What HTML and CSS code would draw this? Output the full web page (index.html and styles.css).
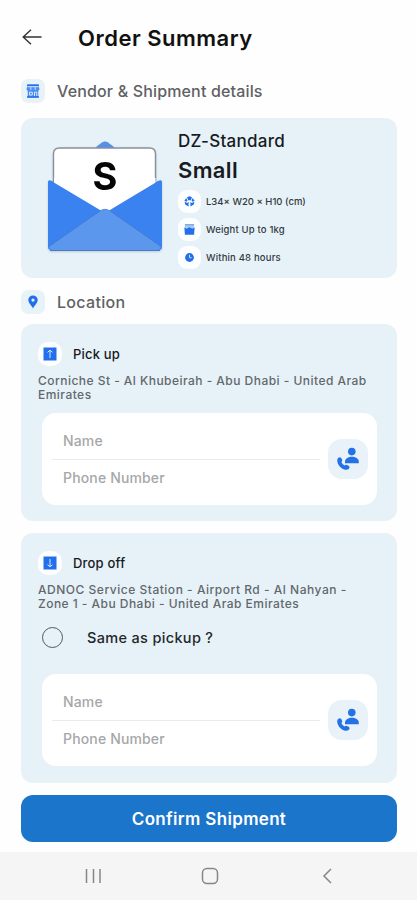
FILE: index.html
```html
<!DOCTYPE html>
<html lang="en">
<head>
<meta charset="utf-8">
<meta name="viewport" content="width=device-width, initial-scale=1">
<title>Order Summary</title>
<link rel="stylesheet" href="styles.css">
</head>
<body>
<svg class="defs" width="0" height="0" aria-hidden="true">
  <symbol id="contact" viewBox="0 0 22 24">
    <circle cx="14.800" cy="4.600" r="3.800"/>
    <path d="M8 16.200v-1.500c0-3.300 3.500-4.900 6.900-4.900s6.900 1.600 6.900 4.900v1.500z"/>
    <path d="M1.400 10.700q1.800-1.200 3 .6l.8 1.700q.4 1.200-.8 2.100c.6 1.600 1.700 2.700 3.200 3.500q1-1.200 2.300-.7l1.800.8q1.700 1.100.4 2.700-1.500 1.900-4.100 1.300C3.900 21.500.8 18.200.2 13.700q-.2-2.100 1.200-3z"/>
  </symbol>
</svg>
<main class="screen">
  <header class="topbar">
    <svg class="back" viewBox="0 0 20 16"><path d="M19.500 8H1.200M9 .8 1.200 8 9 15.200"/></svg>
    <h1>Order Summary</h1>
  </header>

  <div class="section vendor">
    <span class="chip"><svg viewBox="0 0 14 14" class="blue"><path d="M1.200.5h11.600v2l.7 2.500c0 .9-.5 1.400-1.200 1.600v6.900H1.700V6.600C1 6.400.5 5.900.5 5l.7-2.500z" fill="#4c8df0"/><path d="M1.200.5h11.600v1.600H1.200zM1 12.300h12v1.400H1z"/><path class="cut" d="M1.500 2.700h11M4.800 3.200v2.600M9.200 3.200v2.600M3.500 8.200h2.800v2.800H3.500zM8.500 12V8.200h2.300V12" stroke-width=".7"/></svg></span>
    <h2>Vendor &amp; Shipment details</h2>
  </div>

  <section class="card product">
    <svg class="envelope" viewBox="0 0 118 114">
      <path d="M50 7 56 2.500q3-2 6 0L68 7v8H50z" fill="#5591e8"/>
      <path d="M7.500 60V14q0-6 6-6h90q6 0 6 6v46z" fill="#fff" stroke="#8b9099" stroke-width="1.400"/>
      <path d="M2 42q0-3 4-1l53 31 53-31q4-2 4 1v65q0 3-3 3H5q-3 0-3-3z" fill="#3b82f1"/>
      <path d="M8 41v1.500L59 73l50.500-30.500V38H8z" fill="#fff"/>
      <path d="M3 107 54 71q5-3.500 10 0l51 36q-1 3-4 3H7q-3 0-4-3z" fill="#5b97ec"/>
      <path d="M3 106 54 71q5-3.500 10 0l51 35" fill="none" stroke="#447cc9" stroke-width=".8"/>
      <path d="M4 110.500h110" stroke="#4b7cc0" stroke-width="1"/>
      <text x="59" y="49.500" text-anchor="middle">S</text>
    </svg>
    <div class="info">
      <h3>DZ-Standard</h3>
      <h4>Small</h4>
      <ul>
        <li><span class="chip white"><svg class="blue" viewBox="0 0 12 12"><path d="M3.300 1.400 6 .4l2.700 1L7.500 4.600h-3zM2.600 2.200l1.200 3L2.500 6.400.4 5.300zM9.400 2.200l-1.200 3 1.300 1.200 2.100-1.100zM.6 6.400l3 1.200L5 6.200v5.200L1.300 9.200zM11.400 6.400l-3 1.200L7 6.200v5.200l3.700-2.200z"/></svg></span><span class="dims">L34× W20 × H10 (cm)</span></li>
        <li><span class="chip white"><svg class="blue" viewBox="0 0 12 12"><path d="M1 .4h10v3.800H1z" fill="#a9c8ed"/><path d="M.4 3.800 3 4.800l3-1.200 3 1.200 2.600-1-.6 7.800H1z"/><path d="M1 .8h10" stroke="#4c88dc" stroke-width=".8" fill="none"/></svg></span><span class="weight">Weight Up to 1kg</span></li>
        <li><span class="chip white"><svg class="blue" viewBox="0 0 12 12"><circle cx="6" cy="6" r="4.800"/><path class="cut" d="M6 3v3.200h2.400"/></svg></span><span class="time">Within 48 hours</span></li>
      </ul>
    </div>
  </section>

  <div class="section location">
    <span class="chip"><svg class="blue" viewBox="0 0 14 14"><path fill-rule="evenodd" d="M7 .4a4.700 4.700 0 0 1 4.700 4.700C11.700 8 8.500 10.500 7 13.400 5.500 10.500 2.300 8 2.300 5.100A4.700 4.700 0 0 1 7 .4zm0 3.100a1.600 1.600 0 1 0 0 3.200 1.600 1.600 0 0 0 0-3.200z"/></svg></span>
    <h2>Location</h2>
  </div>

  <section class="card stop pickup">
    <div class="stop-head"><span class="chip white"><svg class="blue" viewBox="0 0 14 14"><path d="M.5.500h13v13H.5z"/><path class="cut" d="M7 11V3.800M4.500 5.300 7 3.200l2.500 2.100"/></svg></span><h3>Pick up</h3></div>
    <p class="address">Corniche St - Al Khubeirah - Abu Dhabi - United Arab<br>Emirates</p>
    <div class="form">
      <div class="fields"><div class="field">Name</div><div class="field">Phone Number</div></div>
      <span class="contact"><svg class="blue"><use href="#contact"/></svg></span>
    </div>
  </section>

  <section class="card stop dropoff">
    <div class="stop-head"><span class="chip white"><svg class="blue" viewBox="0 0 14 14"><path d="M.5.500h13v13H.5z"/><path class="cut" d="M7 3v7.200M4.500 8.700 7 10.800l2.500-2.100"/></svg></span><h3>Drop off</h3></div>
    <p class="address"><span class="wide">ADNOC Service Station - Airport Rd - Al Nahyan -</span><br>Zone 1 - Abu Dhabi - United Arab Emirates</p>
    <div class="same"><span class="radio"></span><span>Same as pickup ?</span></div>
    <div class="form">
      <div class="fields"><div class="field">Name</div><div class="field">Phone Number</div></div>
      <span class="contact"><svg class="blue"><use href="#contact"/></svg></span>
    </div>
  </section>

  <button class="confirm" type="button">Confirm Shipment</button>

  <nav class="sysnav">
    <svg viewBox="0 0 18 18"><path d="M2.500 2v14M9.500 2v14M16 2v14"/></svg>
    <svg viewBox="0 0 18 18"><rect x="1.500" y="1.500" width="15" height="15" rx="4.500"/></svg>
    <svg viewBox="0 0 18 18"><path d="M13 2 6 9l7 7"/></svg>
  </nav>
</main>
</body>
</html>
```
FILE: styles.css
```css
* { box-sizing: border-box; margin: 0; padding: 0; }
body { background: #fff; font-family: Inter, "Liberation Sans", sans-serif; }
svg { display: block; flex: none; }
.defs { height: 0; }
.screen { width: 417px; height: 900px; display: flex; flex-direction: column; overflow: hidden; background: #fefefe; white-space: nowrap; }
.topbar { height: 79px; padding: 0 22px; display: flex; align-items: center; }
.back { width: 20px; height: 16px; margin-top: -5px; fill: none; stroke: #333; stroke-width: 1.4; }
h1 { margin: -3px 0 0 36px; font-size: 22px; font-weight: 600; letter-spacing: .5px; color: #111; }
.section { height: 24px; margin-left: 21px; display: flex; align-items: center; gap: 12px; }
.chip { width: 24px; height: 24px; border-radius: 7px; background: #e8f3f9; display: flex; align-items: center; justify-content: center; flex: none; }
.chip svg { width: 14px; height: 14px; }
.chip.white { background: #fcfeff; }
.blue { fill: #236feb; }
.cut { fill: none; stroke: #d6e8fb; stroke-width: 1; }
h2 { font-size: 16px; font-weight: 500; letter-spacing: .16px; color: #606163; }
.location h2 { letter-spacing: .3px; }
.card { width: 376px; margin-left: 21px; border-radius: 12px; background: #e7f2f8; flex: none; }
.product { height: 160px; margin-top: 15px; display: flex; padding: 22px 0 0 25px; }
.envelope { width: 118px; height: 114px; filter: drop-shadow(0 1px 1px #8ea5b880); }
.envelope text { font: 700 38px Inter, sans-serif; fill: #050505; }
.info { margin: -10px 0 0 14px; }
.info h3 { font-size: 17px; line-height: 22px; font-weight: 500; letter-spacing: .28px; color: #171b1f; }
.info h4 { font-size: 22px; line-height: 27px; margin-top: 5px; font-weight: 600; letter-spacing: .35px; color: #171b1f; }
.info ul { list-style: none; display: grid; gap: 5px; margin-top: 6px; }
.info li { height: 23px; display: flex; align-items: center; gap: 5px; font-size: 9.5px; font-weight: 500; color: #333a3f; }
.weight, .time { letter-spacing: .17px; }
.info .chip { width: 23px; height: 23px; border-radius: 9px; }
.info .chip svg { width: 11px; height: 11px; }
.location { margin-top: 12px; }
.stop { padding: 18px 20px 0 17px; }
.pickup { height: 197px; margin-top: 10px; }
.dropoff { height: 250px; margin-top: 12px; }
.stop-head { height: 24px; display: flex; align-items: center; gap: 11px; }
.stop-head h3 { font-size: 13px; font-weight: 500; letter-spacing: .2px; color: #171a1d; }
.stop .chip { border-radius: 10px; }
.address { margin-top: 8px; font-size: 12px; line-height: 13.500px; font-weight: 500; letter-spacing: .47px; color: #62686c; }
.wide { letter-spacing: .52px; }
.form { height: 92px; margin: 12px 0 0 4px; background: #fff; border-radius: 14px; display: flex; align-items: center; justify-content: space-between; padding: 0 9px 0 10px; }
.fields { width: 268px; margin-top: -1px; }
.field { height: 37px; padding-left: 11px; display: flex; align-items: center; font-size: 14px; font-weight: 500; letter-spacing: .15px; color: #a6a7a8; }
.field + .field { height: 36px; border-top: 1px solid #e9ebed; }
.contact { width: 40px; height: 40px; border-radius: 14px; background: #e9f2f8; display: flex; align-items: center; justify-content: center; }
.contact svg { width: 22px; height: 24px; fill: #2372e6; }
.same { height: 24px; margin: 15px 0 0 4px; display: flex; align-items: center; gap: 24px; font-size: 14.5px; font-weight: 500; letter-spacing: .33px; color: #22282c; }
.radio { width: 21px; height: 21px; border: 1.5px solid #51575b; border-radius: 50%; }
.dropoff .form { margin-top: 25px; }
.confirm { width: 376px; height: 47px; margin: 12px 0 0 21px; border: 0; border-radius: 12px; background: #1b75cb; color: #fff; font: 600 17px Inter, sans-serif; letter-spacing: .32px; flex: none; }
.sysnav { height: 48px; margin-top: 10px; background: #f5f5f5; display: flex; align-items: center; padding: 0 81px 0 84px; justify-content: space-between; flex: none; }
.sysnav svg { width: 18px; height: 18px; fill: none; stroke: #868686; stroke-width: 1.500; }
```
